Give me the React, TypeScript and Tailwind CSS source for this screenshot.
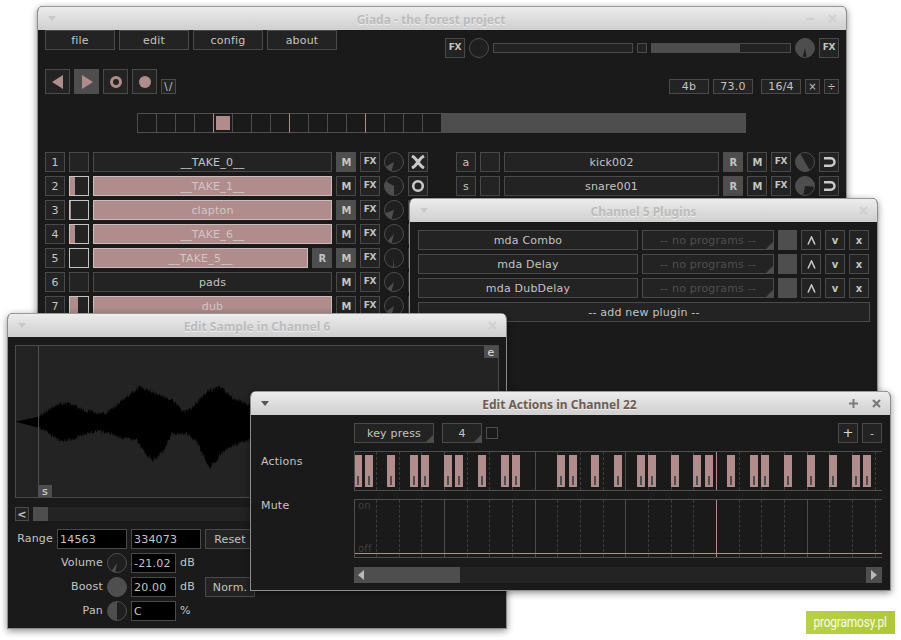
import type { ReactNode } from "react";
import { twMerge } from "tailwind-merge";

const pt = (a: number) => {
  const r = (a * Math.PI) / 180;
  return `${(10 + 9.5 * Math.sin(r)).toFixed(2)} ${(10 - 9.5 * Math.cos(r)).toFixed(2)}`;
};

function Knob({ from, to }: { from?: number; to?: number }) {
  const hasWedge = from !== undefined && to !== undefined;
  return (
    <svg width="20" height="20" viewBox="0 0 20 20" className="shrink-0">
      <circle cx="10" cy="10" r="9.5" fill="#1f1f1f" stroke="#4e4e4e" />
      {hasWedge && (
        <path
          d={`M10 10 L${pt(from)} A9.5 9.5 0 ${to - from > 180 ? 1 : 0} 1 ${pt(to)} Z`}
          fill="#4e4e4e"
        />
      )}
    </svg>
  );
}

const box =
  "shrink-0 flex items-center justify-center border border-[#4a4a4a] bg-[#232323] text-[#c4c4c4] text-[11px] tracking-[0.2px] leading-none";

function Btn({ className = "", children }: { className?: string; children?: ReactNode }) {
  return <div className={twMerge(box, className)}>{children}</div>;
}

function Fx() {
  return <Btn className="w-5 h-5 font-bold text-[9px] tracking-[-0.3px]">FX</Btn>;
}

function Flag({ label, on }: { label: string; on?: boolean }) {
  return (
    <Btn className={twMerge("w-5 h-5 font-bold tracking-normal", on && "bg-[#4e4e4e] border-[#4e4e4e]")}>
      <span className="text-[11px] scale-x-90">{label}</span>
    </Btn>
  );
}

function Corner() {
  return (
    <svg width="7" height="7" viewBox="0 0 7 7" className="absolute right-0 bottom-0">
      <polygon points="7,0 7,7 0,7" fill="#4e4e4e" />
    </svg>
  );
}

function Arrow({ dark }: { dark?: boolean }) {
  return (
    <svg width="10" height="6" viewBox="0 0 10 6">
      <polygon points="1,0 9,0 5,5" fill={dark ? "#555555" : "#c9c9c9"} />
    </svg>
  );
}

function CloseIcon({ dark }: { dark?: boolean }) {
  return (
    <svg width="9" height="9" viewBox="0 0 9 9">
      <path d="M1 1 8 8 M8 1 1 8" stroke={dark ? "#7a7a7a" : "#cfcfcf"} strokeWidth="2.2" />
    </svg>
  );
}

function Win({
  pos,
  title,
  active,
  extra,
  children,
}: {
  pos: string;
  title: string;
  active?: boolean;
  extra?: ReactNode;
  children: ReactNode;
}) {
  return (
    <div
      className={`absolute ${pos} rounded-t-[6px] overflow-hidden border-x border-b border-[#8d8d8d] bg-[#1a1a1a] shadow-[0_2px_7px_rgba(0,0,0,0.45)]`}
    >
      <div className="h-6 flex items-center border-t border-[#9a9a9a] bg-gradient-to-b from-[#ececec] to-[#cfcfcf]">
        <div className="w-[30px] pl-[9px] flex items-center">
          <Arrow dark={active} />
        </div>
        <div
          className={`flex-1 pt-[2px] text-center text-[12px] font-bold font-['Noto_Sans',sans-serif] [text-shadow:0_1px_0_#eeeeee] ${
            active ? "text-[#6e5d53]" : "text-[#bcbcbc]"
          }`}
        >
          {title}
        </div>
        <div className={`${extra ? "w-[52px]" : "w-[30px]"} pr-[9px] flex items-center justify-end gap-[14px]`}>
          {extra}
          <CloseIcon dark={active} />
        </div>
      </div>
      {children}
    </div>
  );
}

type Ch = {
  key: string;
  name: string;
  knob: [number, number];
  play?: string;
  live?: boolean;
  rec?: boolean;
  mute?: boolean;
  icon?: "x" | "o";
};

const leftChannels: Ch[] = [
  { key: "1", name: "__TAKE_0__", knob: [195, 240], mute: true, icon: "x" },
  { key: "2", name: "__TAKE_1__", knob: [180, 300], live: true, play: "w-[5px]", icon: "o" },
  { key: "3", name: "clapton", knob: [195, 250], live: true, play: "w-[1px]", mute: true },
  { key: "4", name: "__TAKE_6__", knob: [195, 222], live: true, play: "w-[5px]" },
  { key: "5", name: "__TAKE_5__", knob: [180, 188], live: true, rec: true, mute: true },
  { key: "6", name: "pads", knob: [195, 225] },
  { key: "7", name: "dub", knob: [195, 235], live: true, play: "w-[8px]" },
];

function ChannelIcon({ icon }: { icon?: "x" | "o" }) {
  if (icon === "x")
    return (
      <svg width="16" height="14" viewBox="0 0 16 14">
        <path d="M2 1C6 3 7 6 8 7C9 8 10 11 14 13M14 1C10 3 9 6 8 7C7 8 6 11 2 13" stroke="#c8c8c8" strokeWidth="3" fill="none" />
      </svg>
    );
  if (icon === "o")
    return (
      <svg width="14" height="14" viewBox="0 0 14 14">
        <circle cx="7" cy="7" r="4.8" stroke="#c8c8c8" strokeWidth="2.6" fill="none" />
      </svg>
    );
  return null;
}

function LoopIcon() {
  return (
    <svg width="13" height="10" viewBox="0 0 13 10">
      <path d="M1 1.25H7.75A3.75 3.75 0 0 1 7.75 8.75H1" stroke="#c8c8c8" strokeWidth="2.5" fill="none" />
    </svg>
  );
}

function CaretUp() {
  return (
    <svg width="9" height="9" viewBox="0 0 9 9">
      <path d="M1 8.5 4.5 1 8 8.5" stroke="#c4c4c4" strokeWidth="1.6" fill="none" />
    </svg>
  );
}

function SampleRow({ ch }: { ch: Ch }) {
  return (
    <div className="flex gap-1 h-5">
      <Btn className="w-5 h-5">{ch.key}</Btn>
      <div className={`shrink-0 w-5 h-5 border bg-[#232323] ${ch.live ? "border-[#c4c4c4]" : "border-[#4a4a4a]"}`}>
        {ch.play && <div className={`h-full bg-[#b08c8c] ${ch.play}`} />}
      </div>
      <Btn className={twMerge("flex-1", ch.live && "bg-[#b08c8c] border-[#c9bcbc] text-[#d2c6c6]")}>{ch.name}</Btn>
      {ch.rec && <Flag label="R" on />}
      <Flag label="M" on={ch.mute} />
      <Fx />
      <Knob from={ch.knob[0]} to={ch.knob[1]} />
      <Btn className="w-5 h-5">
        <ChannelIcon icon={ch.icon} />
      </Btn>
    </div>
  );
}

function KeyRow({ k, name, knob }: { k: string; name: string; knob: [number, number] }) {
  return (
    <div className="flex gap-1 h-5">
      <Btn className="w-5 h-5">{k}</Btn>
      <Btn className="w-5 h-5" />
      <Btn className="flex-1">{name}</Btn>
      <Flag label="R" on />
      <Flag label="M" />
      <Fx />
      <Knob from={knob[0]} to={knob[1]} />
      <Btn className="w-5 h-5">
        <LoopIcon />
      </Btn>
    </div>
  );
}

function Tri({ dir }: { dir: "l" | "r" }) {
  return (
    <svg width="12" height="14" viewBox="0 0 12 14">
      <polygon points={dir === "l" ? "11,0 11,14 0,7" : "1,0 1,14 12,7"} fill="#b08c8c" />
    </svg>
  );
}

function MainWindow() {
  return (
    <Win
      pos="left-[37px] top-[6px] w-[810px] h-[390px]"
      title="Giada - the forest project"
      extra={<div className="w-2 h-[2px] bg-[#cfcfcf]" />}
    >
      <div className="px-[7px]">
        <div className="flex justify-between h-7">
          <div className="flex gap-1">
            {["file", "edit", "config", "about"].map((m) => (
              <Btn key={m} className="w-[70px] h-5">
                {m}
              </Btn>
            ))}
          </div>
          <div className="flex gap-1 items-center h-5 mt-2">
            <Fx />
            <Knob />
            <div className="w-[140px] h-[10px] border border-[#4a4a4a] bg-[#232323]" />
            <div className="w-[10px] h-[10px] border border-[#4a4a4a] bg-[#232323]" />
            <div className="w-[140px] h-[10px] border border-[#4a4a4a] bg-[#232323]">
              <div className="w-[88px] h-full bg-[#4e4e4e]" />
            </div>
            <Knob from={195} to={530} />
            <Fx />
          </div>
        </div>

        <div className="flex justify-between items-end mt-[11px] h-[25px]">
          <div className="flex gap-1 items-end">
            <Btn className="w-[25px] h-[25px]">
              <Tri dir="l" />
            </Btn>
            <Btn className="w-[25px] h-[25px] bg-[#4e4e4e] border-[#4e4e4e]">
              <Tri dir="r" />
            </Btn>
            <Btn className="w-[25px] h-[25px]">
              <div className="w-3 h-3 rounded-full border-[3px] border-[#b08c8c]" />
            </Btn>
            <Btn className="w-[25px] h-[25px]">
              <div className="w-3 h-3 rounded-full bg-[#b08c8c]" />
            </Btn>
            <Btn className="w-[15px] h-[15px] text-[10px] tracking-[1.5px] pl-[1px]">\/</Btn>
          </div>
          <div className="flex items-end">
            <Btn className="w-10 h-[15px]">4b</Btn>
            <Btn className="w-10 h-[15px] ml-1">73.0</Btn>
            <Btn className="w-10 h-[15px] ml-2">16/4</Btn>
            <Btn className="w-[15px] h-[15px] ml-1 text-[10px]">×</Btn>
            <Btn className="w-[15px] h-[15px] ml-1 text-[10px]">÷</Btn>
          </div>
        </div>

        <div className="flex mt-[19px] ml-[92px] h-5">
          {Array.from({ length: 16 }, (_, i) => (
            <div
              key={i}
              className={`w-[19px] h-5 flex items-center justify-center border-y border-y-[#4e4e4e] border-l ${
                i > 0 && i % 4 === 0 ? "border-l-[#b08c8c]" : "border-l-[#4e4e4e]"
              }`}
            >
              {i === 4 && <div className="w-[14px] h-[14px] bg-[#b08c8c]" />}
            </div>
          ))}
          <div className="w-[305px] h-5 bg-[#4e4e4e]" />
        </div>

        <div className="flex gap-7 mt-[19px]">
          <div className="w-[383px] flex flex-col gap-1">
            {leftChannels.map((ch) => (
              <SampleRow key={ch.key} ch={ch} />
            ))}
          </div>
          <div className="w-[383px] flex flex-col gap-1">
            <KeyRow k="a" name="kick002" knob={[150, 330]} />
            <KeyRow k="s" name="snare001" knob={[190, 455]} />
          </div>
        </div>
      </div>
    </Win>
  );
}

function PluginWindow() {
  return (
    <Win pos="left-[409px] top-[198px] w-[469px] h-[205px]" title="Channel 5 Plugins">
      <div className="px-2 pt-2 flex flex-col gap-1">
        {["mda Combo", "mda Delay", "mda DubDelay"].map((p) => (
          <div key={p} className="flex gap-1 h-5">
            <Btn className="w-[220px] h-5">{p}</Btn>
            <Btn className="relative w-[132px] h-5 text-[#4e4e4e]">
              -- no programs --
              <Corner />
            </Btn>
            <div className="w-5 h-5 bg-[#4e4e4e]" />
            <Btn className="w-5 h-5">
              <CaretUp />
            </Btn>
            <Btn className="w-5 h-5 font-bold text-[10px]">v</Btn>
            <Btn className="w-5 h-5 font-bold text-[10px]">x</Btn>
          </div>
        ))}
        <Btn className="w-[452px] h-5">-- add new plugin --</Btn>
      </div>
    </Win>
  );
}

const topEnv = [[46,350],[115,335],[130,325],[175,295],[210,295],[250,315],[290,325],[320,325],[370,285],[420,245],[480,270],[520,290],[550,320],[575,310],[620,260],[660,245],[700,280],[745,300],[790,310]];
const botEnv = [[46,350],[115,368],[130,375],[175,405],[215,405],[260,385],[290,375],[330,385],[365,400],[410,405],[440,450],[460,465],[490,440],[515,385],[560,385],[590,410],[630,490],[660,450],[700,420],[745,405],[790,400]];

function lerp(env: number[][], z: number) {
  for (let i = 1; i < env.length; i++) {
    if (z <= env[i][0]) {
      const t = (z - env[i - 1][0]) / (env[i][0] - env[i - 1][0]);
      return env[i - 1][1] + t * (env[i][1] - env[i - 1][1]);
    }
  }
  return env[env.length - 1][1];
}

function wavePath() {
  let seed = 17;
  const rnd = () => {
    seed = (seed * 16807) % 2147483647;
    return seed / 2147483647;
  };
  const top: string[] = [];
  const bot: string[] = [];
  for (let z = 46; z <= 790; z += 1.5) {
    const x = (z / 3 - 16).toFixed(1);
    const k = z < 115 ? 0 : 2.4;
    top.push(`${x} ${(lerp(topEnv, z) / 3 - 41 - rnd() * k * 2 + k).toFixed(1)}`);
    bot.unshift(`${x} ${(lerp(botEnv, z) / 3 - 41 + rnd() * k * 2 - k).toFixed(1)}`);
  }
  return `M${top.join(" L")} L${bot.join(" L")} Z`;
}

const field = "shrink-0 h-5 border border-[#4a4a4a] bg-black text-[#c4c4c4] text-[11px] tracking-[0.2px] pl-[2px] flex items-center leading-none";

function SampleWindow() {
  return (
    <Win pos="left-[7px] top-[313px] w-[500px] h-[316px]" title="Edit Sample in Channel 6">
      <div className="px-[7px] pt-2 text-[11px] tracking-[0.2px] text-[#c4c4c4]">
        <div className="relative h-[153px] border border-[#4a4a4a] bg-[#232323]">
          <svg width="482" height="151" className="absolute left-0 top-0">
            <path d={wavePath()} fill="#000000" />
          </svg>
          <div className="absolute left-[22px] top-0 bottom-0 w-px bg-[#4e4e4e]" />
          <div className="absolute left-[22px] bottom-0 w-[14px] h-3 bg-[#4e4e4e] flex items-center justify-center text-[11px] leading-none text-[#e0e0e0]">
            s
          </div>
          <div className="absolute right-0 top-0 w-[14px] h-3 bg-[#4e4e4e] flex items-center justify-center text-[11px] leading-none text-[#e0e0e0]">
            e
          </div>
        </div>

        <div className="flex gap-1 mt-[9px] h-[14px]">
          <Btn className="w-[14px] h-[14px] font-bold">&lt;</Btn>
          <div className="flex-1 h-[14px] bg-[#232323]">
            <div className="w-[15px] h-full bg-[#4e4e4e]" />
          </div>
        </div>

        <div className="flex flex-col gap-1 mt-2">
          <div className="flex gap-1 items-center">
            <div className="w-[38px] text-right">Range</div>
            <div className={`${field} w-[70px]`}>14563</div>
            <div className={`${field} w-[70px]`}>334073</div>
            <Btn className="w-[50px] h-5">Reset</Btn>
          </div>
          <div className="flex gap-1 items-center">
            <div className="w-[88px] text-right">Volume</div>
            <Knob from={190} to={215} />
            <div className={`${field} w-[45px]`}>-21.02</div>
            <div className="w-[21px]">dB</div>
          </div>
          <div className="flex gap-1 items-center">
            <div className="w-[88px] text-right">Boost</div>
            <Knob from={0} to={359.9} />
            <div className={`${field} w-[45px]`}>20.00</div>
            <div className="w-[21px]">dB</div>
            <Btn className="w-[50px] h-5">Norm.</Btn>
          </div>
          <div className="flex gap-1 items-center">
            <div className="w-[88px] text-right">Pan</div>
            <Knob from={180} to={360} />
            <div className={`${field} w-[45px]`}>C</div>
            <div className="w-[21px]">%</div>
          </div>
        </div>
      </div>
    </Win>
  );
}

const bars = [354,365,387,410,421,444,455,478,501,512,557,569,591,614,637,648,671,693,705,727,750,761,784,807,829,852,863];
const solid = [444,535,625,807];
const dashed = [376,399,421,467,489,512,557,580,603,648,671,693,739,761,784,829,852,875];

function Grid() {
  return (
    <>
      {dashed.map((x) => (
        <div key={x} className="absolute top-0 bottom-0 border-l border-dashed border-[#3c3c3c]" style={{ left: x - 355 }} />
      ))}
      {solid.map((x) => (
        <div key={x} className="absolute top-0 bottom-0 w-px bg-[#4e4e4e]" style={{ left: x - 355 }} />
      ))}
      <div className="absolute top-0 bottom-0 left-[361px] w-px bg-[#b08c8c]" />
    </>
  );
}

function ActionsWindow() {
  return (
    <Win
      pos="left-[250px] top-[391px] w-[641px] h-[200px]"
      title="Edit Actions in Channel 22"
      active
      extra={
        <svg width="9" height="9" viewBox="0 0 9 9">
          <path d="M4.5 0V9M0 4.5H9" stroke="#7a7a7a" strokeWidth="2" />
        </svg>
      }
    >
      <div className="pl-[10px] pr-2 pt-2 flex gap-0 text-[11px] tracking-[0.2px] text-[#c4c4c4]">
        <div className="w-[93px] shrink-0 pt-[29px]">
          <div className="h-5 flex items-center">Actions</div>
          <div className="mt-[28px] h-3 flex items-center">Mute</div>
        </div>
        <div className="w-[528px] shrink-0">
          <div className="flex items-center h-5">
            <Btn className="relative w-20 h-5">
              key press
              <Corner />
            </Btn>
            <Btn className="relative w-10 h-5 ml-2">
              4
              <Corner />
            </Btn>
            <div className="w-3 h-3 ml-1 border border-[#4e4e4e] bg-[#1a1a1a]" />
            <Btn className="w-5 h-5 ml-auto text-[13px] text-[#d8d8d8]">+</Btn>
            <Btn className="w-5 h-5 ml-1">-</Btn>
          </div>

          <div className="relative h-10 mt-2 border-y border-l border-[#4e4e4e] overflow-hidden">
            <Grid />
            {bars.map((x) => (
              <div
                key={x}
                className="absolute top-[3px] w-2 h-8 bg-[#b08c8c] flex items-end justify-center pb-[2px]"
                style={{ left: x - 355 }}
              >
                <div className="w-[2px] h-[9px] bg-[#4e4e4e]" />
              </div>
            ))}
          </div>

          <div className="relative h-[59px] mt-2 border-y border-l border-[#4e4e4e] overflow-hidden">
            <Grid />
            <div className="absolute left-[3px] top-[1px] text-[#3e3e3e] text-[10px] leading-none">on</div>
            <div className="absolute left-[3px] bottom-[3px] text-[#3e3e3e] text-[10px] leading-none">off</div>
            <div className="absolute left-0 right-0 bottom-[3px] h-px bg-[#b08c8c]" />
          </div>

          <div className="flex h-4 mt-[9px] bg-[#232323] justify-between">
            <div className="w-[106px] h-4 bg-[#4e4e4e] flex items-center pl-[4px]">
              <svg width="6" height="10" viewBox="0 0 6 10">
                <polygon points="6,0 6,10 0,5" fill="#b8b8b8" />
              </svg>
            </div>
            <div className="w-4 h-4 bg-[#4e4e4e] flex items-center justify-center">
              <svg width="6" height="10" viewBox="0 0 6 10">
                <polygon points="0,0 0,10 6,5" fill="#b8b8b8" />
              </svg>
            </div>
          </div>
        </div>
      </div>
    </Win>
  );
}

export default function App() {
  return (
    <div className="relative w-[901px] h-[640px] overflow-hidden bg-white font-['DejaVu_Sans',sans-serif]">
      <MainWindow />
      <PluginWindow />
      <SampleWindow />
      <ActionsWindow />
      <div className="absolute left-[806px] top-[611px] w-[89px] h-[23px] bg-gradient-to-r from-[#b9d049] to-[#aec836] flex items-center justify-center text-white/90 text-[14px] font-['Roboto',sans-serif]">
        <span className="inline-block scale-x-[0.85] whitespace-nowrap tracking-[-0.2px]">programosy.pl</span>
      </div>
    </div>
  );
}
